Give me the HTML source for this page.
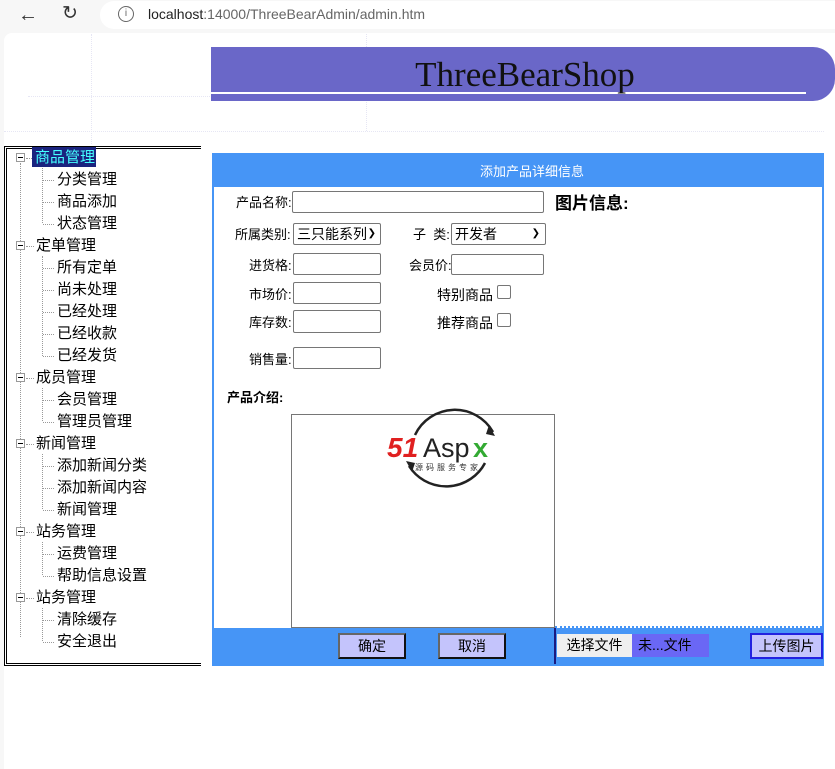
<!DOCTYPE html>
<html><head><meta charset="utf-8"><style>
*{margin:0;padding:0;box-sizing:border-box}
body{width:835px;height:769px;overflow:hidden;background:#f7f7f7;font-family:"Liberation Sans","Noto Sans CJK SC",sans-serif;font-size:14px;color:#000;position:relative}
.a{position:absolute}
.t{font-size:14px;line-height:16px;white-space:nowrap}
.tr{font-size:15px;line-height:17px}
.inp{position:absolute;background:#fff;border:1px solid #767676;border-radius:2px;height:22px}
.sel{position:absolute;background:#fff;border:1px solid #767676;border-radius:2px;height:22px;font-size:14px;line-height:20px;padding-left:3px}
.cb{position:absolute;width:14px;height:14px;border:1px solid #767676;border-radius:2px;background:#fff}
.btn{position:absolute;height:26px;background:#c4c4fc;border:2px solid #222;border-color:#666 #111 #111 #666;text-align:center;line-height:22px;font-size:14px}
.vl{position:absolute;border-left:1px dotted #999;width:0}
.hl{position:absolute;border-top:1px dotted #999;height:0}
.pm{position:absolute;width:9px;height:9px;border:1px solid #999;background:#fff}
.pm:after{content:"";position:absolute;left:1px;top:3px;width:5px;height:1px;background:#000}
</style></head><body>
<!-- chrome -->
<div class="a" style="left:100px;top:1px;width:760px;height:28px;background:#fff;border-radius:14px"></div>
<div class="a" style="left:18px;top:5px;font-size:20px;line-height:20px;color:#333">&#8592;</div>
<div class="a" style="left:62px;top:4px;font-size:19px;line-height:20px;color:#333">&#8635;</div>
<div class="a" style="left:118px;top:6px;width:16px;height:16px;border:1.5px solid #666;border-radius:50%;font-size:10px;line-height:13px;text-align:center;color:#666">i</div>
<div class="a" style="left:148px;top:6px;font-size:14px;line-height:16px;color:#222">localhost<span style="color:#666">:14000/ThreeBearAdmin/admin.htm</span></div>
<div class="a" style="left:4px;top:33px;width:831px;height:736px;background:#fff;border-radius:8px 0 0 0"></div>
<!-- faint bg lines -->
<div class="a" style="left:91px;top:34px;height:110px;border-left:1px dotted #e6e6f4"></div>
<div class="a" style="left:366px;top:34px;height:97px;border-left:1px dotted #e6e6f4"></div>
<div class="a" style="left:28px;top:96px;width:360px;border-top:1px dotted #e6e6f4"></div>
<div class="a" style="left:4px;top:131px;width:820px;border-top:1px dotted #e6e6f4"></div>
<!-- header -->
<div class="a" style="left:211px;top:47px;width:624px;height:54px;background:#6a67c8;border-radius:0 22px 22px 0"></div>
<div class="a" style="left:211px;top:92px;width:595px;height:2px;background:#fff"></div>
<div class="a" style="left:211px;top:55px;width:628px;text-align:center;font-family:'Liberation Serif',serif;font-size:35px;line-height:40px;color:#111">ThreeBearShop</div>
<!-- tree -->
<div class="a" style="left:4px;top:146px;width:197px;height:520px;border:3px double #000;border-right:none;background:#fff"></div>
<div class="vl" style="left:20px;top:163px;height:474px"></div>
<div class="vl" style="left:42px;top:168px;height:55px"></div>
<div class="vl" style="left:42px;top:256px;height:100px"></div>
<div class="vl" style="left:42px;top:388px;height:33px"></div>
<div class="vl" style="left:42px;top:454px;height:55px"></div>
<div class="vl" style="left:42px;top:542px;height:33px"></div>
<div class="vl" style="left:42px;top:608px;height:33px"></div>
<div class="a" style="left:32px;top:147px;width:64px;height:20px;background:#1a237e"></div>
<div class="a t tr" style="left:35px;top:149px;color:#4ff">商品管理</div>
<div class="pm" style="left:16px;top:153px"></div><div class="hl" style="left:26px;top:158px;width:6px"></div>
<div class="a t tr" style="left:36px;top:237px">定单管理</div><div class="pm" style="left:16px;top:241px"></div><div class="hl" style="left:26px;top:246px;width:8px"></div>
<div class="a t tr" style="left:36px;top:369px">成员管理</div><div class="pm" style="left:16px;top:373px"></div><div class="hl" style="left:26px;top:378px;width:8px"></div>
<div class="a t tr" style="left:36px;top:435px">新闻管理</div><div class="pm" style="left:16px;top:439px"></div><div class="hl" style="left:26px;top:444px;width:8px"></div>
<div class="a t tr" style="left:36px;top:523px">站务管理</div><div class="pm" style="left:16px;top:527px"></div><div class="hl" style="left:26px;top:532px;width:8px"></div>
<div class="a t tr" style="left:36px;top:589px">站务管理</div><div class="pm" style="left:16px;top:593px"></div><div class="hl" style="left:26px;top:598px;width:8px"></div>
<div class="a t tr" style="left:57px;top:171px">分类管理</div><div class="hl" style="left:43px;top:180px;width:11px"></div>
<div class="a t tr" style="left:57px;top:193px">商品添加</div><div class="hl" style="left:43px;top:202px;width:11px"></div>
<div class="a t tr" style="left:57px;top:215px">状态管理</div><div class="hl" style="left:43px;top:224px;width:11px"></div>
<div class="a t tr" style="left:57px;top:259px">所有定单</div><div class="hl" style="left:43px;top:268px;width:11px"></div>
<div class="a t tr" style="left:57px;top:281px">尚未处理</div><div class="hl" style="left:43px;top:290px;width:11px"></div>
<div class="a t tr" style="left:57px;top:303px">已经处理</div><div class="hl" style="left:43px;top:312px;width:11px"></div>
<div class="a t tr" style="left:57px;top:325px">已经收款</div><div class="hl" style="left:43px;top:334px;width:11px"></div>
<div class="a t tr" style="left:57px;top:347px">已经发货</div><div class="hl" style="left:43px;top:356px;width:11px"></div>
<div class="a t tr" style="left:57px;top:391px">会员管理</div><div class="hl" style="left:43px;top:400px;width:11px"></div>
<div class="a t tr" style="left:57px;top:413px">管理员管理</div><div class="hl" style="left:43px;top:422px;width:11px"></div>
<div class="a t tr" style="left:57px;top:457px">添加新闻分类</div><div class="hl" style="left:43px;top:466px;width:11px"></div>
<div class="a t tr" style="left:57px;top:479px">添加新闻内容</div><div class="hl" style="left:43px;top:488px;width:11px"></div>
<div class="a t tr" style="left:57px;top:501px">新闻管理</div><div class="hl" style="left:43px;top:510px;width:11px"></div>
<div class="a t tr" style="left:57px;top:545px">运费管理</div><div class="hl" style="left:43px;top:554px;width:11px"></div>
<div class="a t tr" style="left:57px;top:567px">帮助信息设置</div><div class="hl" style="left:43px;top:576px;width:11px"></div>
<div class="a t tr" style="left:57px;top:611px">清除缓存</div><div class="hl" style="left:43px;top:620px;width:11px"></div>
<div class="a t tr" style="left:57px;top:633px">安全退出</div><div class="hl" style="left:43px;top:642px;width:11px"></div>
<!-- panel -->
<div class="a" style="left:212px;top:153px;width:612px;height:513px;background:#4695f6"></div>
<div class="a t" style="left:212px;top:164px;width:640px;text-align:center;color:#fff;font-size:13px">添加产品详细信息</div>
<div class="a" style="left:214px;top:187px;width:608px;height:441px;background:#fff"></div>
<div class="a" style="left:555px;top:626px;width:267px;border-top:2px dotted #4695f6"></div>
<div class="a t" style="left:236px;top:195px;font-size:13px">产品名称:</div><div class="inp" style="left:292px;top:191px;width:252px"></div>
<div class="a t" style="left:555px;top:194px;font-size:17px;line-height:20px;font-weight:bold">图片信息:</div>
<div class="a t" style="left:235px;top:227px;font-size:13px">所属类别:</div><div class="sel" style="left:293px;top:223px;width:88px">三只能系列<span style="position:absolute;right:4px;font-size:10px">&#10095;</span></div>
<div class="a t" style="left:413px;top:227px;font-size:13px">子&nbsp; 类:</div><div class="sel" style="left:451px;top:223px;width:95px">开发者<span style="position:absolute;right:5px;font-size:10px">&#10095;</span></div>
<div class="a t" style="left:249px;top:258px;font-size:13px">进货格:</div><div class="inp" style="left:293px;top:253px;width:88px"></div>
<div class="a t" style="left:409px;top:258px;font-size:13px">会员价:</div><div class="inp" style="left:451px;top:254px;width:93px;height:21px"></div>
<div class="a t" style="left:249px;top:287px;font-size:13px">市场价:</div><div class="inp" style="left:293px;top:282px;width:88px"></div>
<div class="a t" style="left:437px;top:287px;font-size:14px">特别商品</div><div class="cb" style="left:497px;top:285px"></div>
<div class="a t" style="left:249px;top:315px;font-size:13px">库存数:</div><div class="inp" style="left:293px;top:310px;width:88px;height:23px"></div>
<div class="a t" style="left:437px;top:315px;font-size:14px">推荐商品</div><div class="cb" style="left:497px;top:313px"></div>
<div class="a t" style="left:249px;top:352px;font-size:13px">销售量:</div><div class="inp" style="left:293px;top:347px;width:88px"></div>
<div class="a t" style="left:227px;top:390px;font-size:13px;font-weight:bold">产品介绍:</div>
<div class="a" style="left:291px;top:414px;width:264px;height:214px;border:1px solid #767676;background:#fff"></div>
<svg class="a" style="left:385px;top:400px" width="130" height="95" viewBox="0 0 130 95">
<path d="M30 35 A44 44 0 0 1 108 32" fill="none" stroke="#222" stroke-width="2.5"/>
<path d="M104 25 L110 36 L101 34 Z" fill="#222"/>
<path d="M100 63 A44 44 0 0 1 24 66" fill="none" stroke="#222" stroke-width="2.5"/>
<path d="M27 72 L21 61 L30 63 Z" fill="#222"/>
<text x="2" y="57" font-family="Liberation Sans,sans-serif" font-weight="bold" font-style="italic" font-size="28" fill="#e02020">51</text>
<text x="38" y="57" font-family="Liberation Sans,sans-serif" font-size="27" fill="#222">Asp</text>
<text x="88" y="57" font-family="Liberation Sans,sans-serif" font-weight="bold" font-size="27" fill="#3a3">x</text>
<text x="30" y="70" font-family="Noto Sans CJK SC,sans-serif" font-size="8" fill="#333" letter-spacing="3">源码服务专家</text>
</svg>
<div class="btn" style="left:338px;top:633px;width:68px">确定</div>
<div class="btn" style="left:438px;top:633px;width:68px">取消</div>
<div class="a" style="left:554px;top:628px;width:2px;height:36px;background:#1a1a80"></div>
<div class="a t" style="left:557px;top:634px;width:75px;height:23px;background:#efefef;line-height:23px;text-align:center">选择文件</div>
<div class="a t" style="left:632px;top:634px;width:77px;height:23px;background:#6a67f5;line-height:23px;padding-left:6px">未...文件</div>
<div class="btn" style="left:750px;top:633px;width:73px;border-color:#2222e0">上传图片</div>
</body></html>
